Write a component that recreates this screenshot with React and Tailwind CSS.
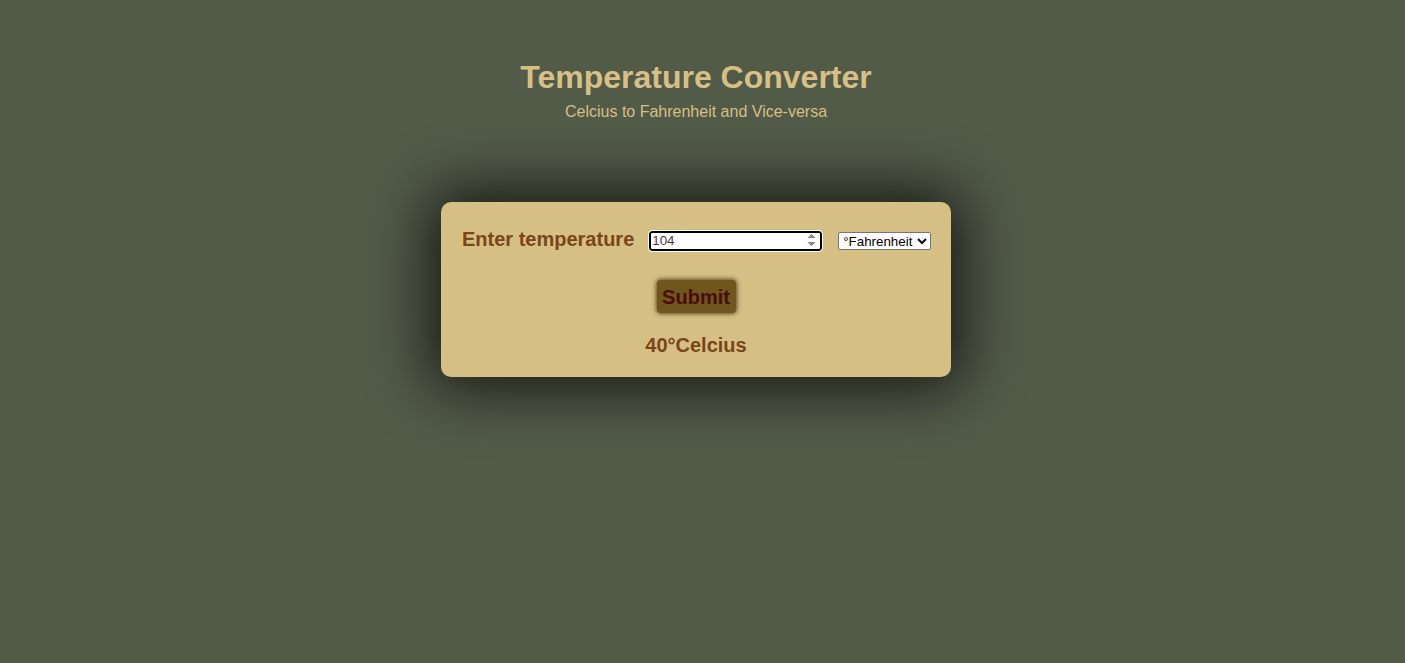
import React, { useState } from "react";

export default function App() {
  const [val, setVal] = useState("104");
  const [unit, setUnit] = useState("f");
  return (
    <div
      className="min-h-[663px] w-full bg-[#525a48] flex flex-col items-center pr-[13px]"
      style={{ fontFamily: '"Liberation Sans", Arial, sans-serif' }}
    >
      <h1 className="mt-[58px] text-[32px] leading-[38px] font-bold text-[#d8bf85]">
        Temperature Converter
      </h1>
      <p className="mt-[6px] text-[16px] leading-[20px] text-[#d8bf85]">
        Celcius to Fahrenheit and Vice-versa
      </p>
      <div className="mt-[80px] w-[510px] rounded-[10px] bg-[#d6bf85] px-[21px] pt-[25px] pb-[20px] flex flex-col items-center shadow-[0_0_60px_10px_rgba(0,0,0,0.75)]">
        <div className="w-full flex items-center">
          <label className="shrink-0 whitespace-nowrap text-[20px] leading-[24px] font-bold text-[#7b4617]">
            Enter temperature
          </label>
          <input
            type="number"
            autoFocus
            value={val}
            onChange={(e) => setVal(e.target.value)}
            className="ml-[15px] mt-[3px] w-[173px] shrink-0 h-[20px] bg-white border-2 border-black rounded-[3px] outline outline-1 outline-white px-[1px] text-[13.33px] leading-[15px] text-[#4a3550] caret-[#7b4617]"
          />
          <select
            value={unit}
            onChange={(e) => setUnit(e.target.value)}
            className="ml-[16px] mt-[3px] w-[93px] shrink-0 h-[18px] bg-white border border-[#767676] rounded-[2px] text-[13.33px] leading-[15px] text-black"
          >
            <option value="f">°Fahrenheit</option>
            <option value="c">°Celcius</option>
          </select>
        </div>
        <button className="mt-[29px] w-[79px] h-[33px] rounded-[4px] bg-[#6e561c] text-[20px] leading-[24px] font-bold text-[#4a0c0c] shadow-[0_0_4px_1px_rgba(60,45,10,0.8)]">
          Submit
        </button>
        <div className="mt-[20px] text-[20px] leading-[24px] font-bold text-[#7b4617]">
          40°Celcius
        </div>
      </div>
    </div>
  );
}
